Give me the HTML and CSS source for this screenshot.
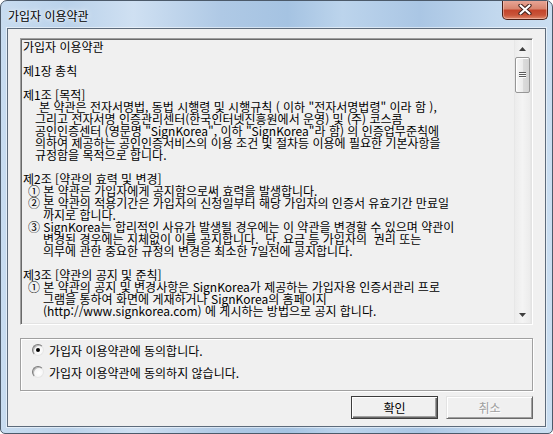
FILE: index.html
```html
<!DOCTYPE html>
<html lang="ko">
<head>
<meta charset="UTF-8">
<title>가입자 이용약관</title>
<link rel="stylesheet" href="styles.css">
</head>
<body>
<div class="window">
  <div class="titlebar">
    <span class="title">가입자 이용약관</span>
    <button class="close-btn" aria-label="닫기">
      <svg width="14" height="11" viewBox="0 0 14 11">
        <path d="M2.5 1.5 L11.5 9.5 M11.5 1.5 L2.5 9.5" stroke="#43231d" stroke-width="4.2" stroke-linecap="round"/>
        <path d="M2.5 1.5 L11.5 9.5 M11.5 1.5 L2.5 9.5" stroke="#ffffff" stroke-width="2.2" stroke-linecap="round"/>
      </svg>
    </button>
  </div>
  <div class="client">
    <div class="memo">
      <div class="memo-text">
        <div class="line">가입자 이용약관</div>
        <div class="line"> </div>
        <div class="line">제1장 총칙</div>
        <div class="line"> </div>
        <div class="line">제1조 [목적]</div>
        <div class="line ind-a">본 약관은 전자서명법, 동법 시행령 및 시행규칙 ( 이하 "전자서명법령" 이라 함 ),</div>
        <div class="line ind-b">그리고 전자서명 인증관리센터(한국인터넷진흥원에서 운영) 및 (주) 코스콤</div>
        <div class="line ind-b">공인인증센터 (영문명 "SignKorea", 이하 "SignKorea"라 함) 의 인증업무준칙에</div>
        <div class="line ind-b">의하여 제공하는 공인인증서비스의 이용 조건 및 절차등 이용에 필요한 기본사항을</div>
        <div class="line ind-b">규정함을 목적으로 합니다.</div>
        <div class="line"> </div>
        <div class="line">제2조 [약관의 효력 및 변경]</div>
        <div class="line ind-c">① 본 약관은 가입자에게 공지함으로써 효력을 발생합니다.</div>
        <div class="line ind-c">② 본 약관의 적용기간은 가입자의 신청일부터 해당 가입자의 인증서 유효기간 만료일</div>
        <div class="line ind-d">까지로 합니다.</div>
        <div class="line ind-c">③ SignKorea는 합리적인 사유가 발생될 경우에는 이 약관을 변경할 수 있으며 약관이</div>
        <div class="line ind-d">변경된 경우에는 지체없이 이를 공지합니다.  단, 요금 등 가입자의  권리 또는</div>
        <div class="line ind-d">의무에 관한 중요한 규정의 변경은 최소한 7일전에 공지합니다.</div>
        <div class="line"> </div>
        <div class="line">제3조 [약관의 공지 및 준칙]</div>
        <div class="line ind-c">① 본 약관의 공지 및 변경사항은 SignKorea가 제공하는 가입자용 인증서관리 프로</div>
        <div class="line ind-d">그램을 통하여 화면에 게재하거나 SignKorea의 홈페이지</div>
        <div class="line ind-d">(http://www.signkorea.com) 에 게시하는 방법으로 공지 합니다.</div>
      </div>
      <div class="vscroll">
        <div class="sb-btn">
          <svg width="7" height="4" viewBox="0 0 7 4"><path d="M3.5 0 L7 4 L0 4 Z" fill="#3f3f3f"/></svg>
        </div>
        <div class="sb-track">
          <div class="sb-thumb"><span class="grip"></span></div>
        </div>
        <div class="sb-btn">
          <svg width="7" height="4" viewBox="0 0 7 4"><path d="M0 0 L7 0 L3.5 4 Z" fill="#3f3f3f"/></svg>
        </div>
      </div>
    </div>
    <div class="agree-group">
      <label class="radio-row"><span class="radio checked"></span>가입자 이용약관에 동의합니다.</label>
      <label class="radio-row"><span class="radio"></span>가입자 이용약관에 동의하지 않습니다.</label>
    </div>
    <div class="button-row">
      <button class="btn default">확인</button>
      <button class="btn" disabled>취소</button>
    </div>
  </div>
</div>
</body>
</html>
```

FILE: styles.css
```css
body {
margin: 0;
font-family: "Noto Sans CJK KR", sans-serif;
font-size: 12px;
color: #000;
background: #fff;
}
.window {
width: 553px;
height: 434px;
box-sizing: border-box;
border: 1px solid #4c5a6a;
border-radius: 7px 7px 5px 5px;
padding: 0 6px 6px 6px;
display: flex;
flex-direction: column;
background: linear-gradient(to right, #c8dcf0 0%, #bad2ea 12%, #cfe0f2 24%, #afc9e5 40%, #a5c3e2 52%, #bcd4ec 62%, #aac6e4 76%, #c2d8ee 90%, #cadef1 100%);
overflow: hidden;
}
.titlebar {
height: 27px;
display: flex;
align-items: flex-start;
justify-content: space-between;
}
.title {
padding: 8px 0 0 1px;
line-height: 14px;
color: #000;
text-shadow: 0 0 6px rgba(255,255,255,0.9), 0 0 3px rgba(255,255,255,0.8);
}
.close-btn {
width: 46px;
height: 20px;
margin: -1px -2px 0 0;
padding: 0;
border: 1px solid #4a2018;
border-top: none;
border-radius: 0 0 5px 5px;
background: linear-gradient(to bottom, #e9a99a 0%, #d88670 45%, #c4452c 55%, #c9553a 80%, #e08a6e 100%);
box-shadow: inset 0 0 0 1px rgba(255,220,210,0.45);
display: flex;
align-items: center;
justify-content: center;
}
.client {
flex: 1;
border: 1px solid #5d6b7b;
box-shadow: 0 0 0 1px rgba(255,255,255,0.5);
background: #f0f0f0;
padding: 9px 12px 7px 12px;
display: flex;
flex-direction: column;
}
.memo {
height: 287px;
box-sizing: border-box;
border: 1px solid;
border-color: #a0a0a0 #ffffff #ffffff #a0a0a0;
box-shadow: inset 1px 1px 0 #696969, inset -1px -1px 0 #e3e3e3;
padding: 1px;
display: flex;
background: #f0f0f0;
}
.memo-text {
flex: 1;
padding: 1px 0 0 1px;
}
.line {
height: 12px;
line-height: 12px;
white-space: pre;
}
.ind-a {
padding-left: 16px;
}
.ind-b {
padding-left: 12px;
}
.ind-c {
padding-left: 5px;
}
.ind-d {
padding-left: 20px;
}
.vscroll {
width: 17px;
display: flex;
flex-direction: column;
background: linear-gradient(to right, #e2e2e2 0, #ececec 1px, #f4f4f4 50%, #ececec 16px, #e2e2e2 17px);
}
.sb-btn {
height: 17px;
display: flex;
align-items: center;
justify-content: center;
}
.sb-track {
flex: 1;
}
.sb-thumb {
height: 36px;
margin: 0 1px;
box-sizing: border-box;
border: 1px solid #969696;
border-radius: 2px;
background: linear-gradient(to right, #f7f7f7 0%, #ececec 50%, #dcdcdc 51%, #d3d3d3 100%);
box-shadow: inset 1px 1px 0 #ffffff;
display: flex;
align-items: center;
justify-content: center;
}
.grip {
width: 7px;
height: 6px;
background: repeating-linear-gradient(to bottom, #5c5c5c 0, #5c5c5c 1px, #fbfbfb 1px, #fbfbfb 2px);
}
.agree-group {
margin-top: 13px;
height: 53px;
box-sizing: border-box;
border: 1px solid #a0a0a0;
box-shadow: inset 1px 1px 0 #ffffff, 1px 1px 0 #ffffff;
padding: 0 0 0 11px;
}
.radio-row {
height: 22px;
display: flex;
align-items: center;
gap: 5px;
}
.radio {
width: 12px;
height: 12px;
box-sizing: border-box;
border-radius: 50%;
border: 1px solid;
border-color: #7a7a7a #e6e6e6 #e6e6e6 #7a7a7a;
background: radial-gradient(circle at 60% 60%, #ffffff 0%, #f4f4f4 60%, #dedede 100%);
box-shadow: inset 1px 1px 0 #b8b8b8;
display: flex;
align-items: center;
justify-content: center;
}
.radio.checked::after {
content: "";
width: 4px;
height: 4px;
border-radius: 50%;
background: #000;
}
.button-row {
margin-top: 5px;
display: flex;
justify-content: flex-end;
gap: 8px;
}
.btn {
width: 87px;
height: 23px;
padding: 0;
font-family: "Noto Sans CJK KR", sans-serif;
font-size: 12px;
color: #000;
background: #f0f0f0;
border: 1px solid;
border-color: #e3e3e3 #696969 #696969 #e3e3e3;
box-shadow: inset 1px 1px 0 #ffffff, inset -1px -1px 0 #a0a0a0;
}
.btn.default {
border-color: #3c3c3c;
box-shadow: inset 1px 1px 0 #ffffff, inset -1px -1px 0 #696969, inset -2px -2px 0 #a0a0a0;
}
.btn:disabled {
color: #a0a0a0;
text-shadow: 1px 1px 0 #ffffff;
}
```
